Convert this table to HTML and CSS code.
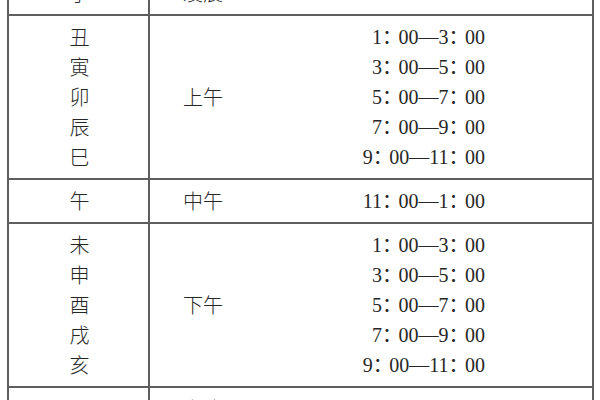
FILE: index.html
```html
<!DOCTYPE html>
<html lang="zh-CN">
<head>
<meta charset="utf-8">
<link rel="stylesheet" href="styles.css">
</head>
<body>
<div class="sheet">
  <div class="table">
    <div class="row first">
      <div class="branch"><span>子</span></div>
      <div class="period">
        <span class="label">凌晨</span>
        <div class="times"><span>0<span class="c">：</span>00—1<span class="c">：</span>00</span></div>
      </div>
    </div>
    <div class="row">
      <div class="branch"><span>丑</span><span>寅</span><span>卯</span><span>辰</span><span>巳</span></div>
      <div class="period">
        <span class="label">上午</span>
        <div class="times">
          <span>1<span class="c">：</span>00—3<span class="c">：</span>00</span>
          <span>3<span class="c">：</span>00—5<span class="c">：</span>00</span>
          <span>5<span class="c">：</span>00—7<span class="c">：</span>00</span>
          <span>7<span class="c">：</span>00—9<span class="c">：</span>00</span>
          <span>9<span class="c">：</span>00—11<span class="c">：</span>00</span>
        </div>
      </div>
    </div>
    <div class="row">
      <div class="branch"><span>午</span></div>
      <div class="period">
        <span class="label">中午</span>
        <div class="times"><span>11<span class="c">：</span>00—1<span class="c">：</span>00</span></div>
      </div>
    </div>
    <div class="row">
      <div class="branch"><span>未</span><span>申</span><span>酉</span><span>戌</span><span>亥</span></div>
      <div class="period">
        <span class="label">下午</span>
        <div class="times">
          <span>1<span class="c">：</span>00—3<span class="c">：</span>00</span>
          <span>3<span class="c">：</span>00—5<span class="c">：</span>00</span>
          <span>5<span class="c">：</span>00—7<span class="c">：</span>00</span>
          <span>7<span class="c">：</span>00—9<span class="c">：</span>00</span>
          <span>9<span class="c">：</span>00—11<span class="c">：</span>00</span>
        </div>
      </div>
    </div>
    <div class="row">
      <div class="branch"><span>子</span></div>
      <div class="period">
        <span class="label">夜晚</span>
        <div class="times"><span>11<span class="c">：</span>00—12<span class="c">：</span>00</span></div>
      </div>
    </div>
  </div>
</div>
</body>
</html>
```

FILE: styles.css
```css
html, body {
  margin: 0;
  padding: 0;
  background: #ffffff;
}

body {
  width: 600px;
  height: 400px;
  overflow: hidden;
  color: #262626;
  font-family: "Liberation Serif", "Noto Sans CJK SC", serif;
  font-size: 20px;
}

.sheet {
  margin-top: -30px;
  margin-left: 7px;
  width: 583px;
  border-left: 2px solid #5e5e5e;
  border-right: 2px solid #5e5e5e;
}

.row {
  display: grid;
  grid-template-columns: 141px 1fr;
  border-top: 2px solid #5e5e5e;
}

.row.first {
  border-top: none;
}

.branch {
  display: flex;
  flex-direction: column;
  align-items: center;
  padding: 6px 0 6px 2px;
  line-height: 30px;
  font-family: "Noto Sans CJK SC", sans-serif;
  font-weight: 300;
  border-right: 2px solid #5e5e5e;
}

.row.first .branch,
.row.first .period {
  padding-top: 8px;
}

.period {
  display: flex;
  align-items: center;
  justify-content: space-between;
  padding: 6px 107px 6px 33px;
  line-height: 30px;
}

.label {
  font-family: "Noto Sans CJK SC", sans-serif;
  font-weight: 300;
}

.times {
  display: flex;
  flex-direction: column;
  align-items: flex-end;
  white-space: nowrap;
}

.c {
  letter-spacing: -3.5px;
}
```
